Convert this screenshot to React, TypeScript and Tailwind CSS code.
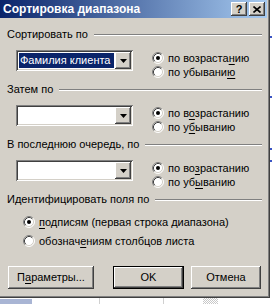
import React from "react";

const raised =
  "shadow-[inset_-1px_-1px_0_#404040,inset_1px_1px_0_#ffffff,inset_-2px_-2px_0_#808080,inset_2px_2px_0_#d4d0c8]";
const sunken =
  "shadow-[inset_1px_1px_0_#808080,inset_-1px_-1px_0_#ffffff,inset_2px_2px_0_#404040,inset_-2px_-2px_0_#d4d0c8]";

function Radio({ checked }: { checked?: boolean }) {
  return (
    <svg width="12" height="12" viewBox="0 0 12 12" className="shrink-0">
      <circle cx="6" cy="6" r="5" fill="#ffffff" />
      <path d="M2.11 9.89 A5.5 5.5 0 0 1 9.89 2.11" stroke="#808080" strokeWidth="1" fill="none" />
      <path d="M9.89 2.11 A5.5 5.5 0 0 1 2.11 9.89" stroke="#ffffff" strokeWidth="1" fill="none" />
      <path d="M2.82 9.18 A4.5 4.5 0 0 1 9.18 2.82" stroke="#404040" strokeWidth="1" fill="none" />
      <path d="M9.18 2.82 A4.5 4.5 0 0 1 2.82 9.18" stroke="#d4d0c8" strokeWidth="1" fill="none" />
      {checked && <circle cx="6" cy="6" r="2" fill="#000000" />}
    </svg>
  );
}

function RadioRow({
  checked,
  children,
  className = "",
}: {
  checked?: boolean;
  children: React.ReactNode;
  className?: string;
}) {
  return (
    <div className={"flex items-center h-[14px] " + className}>
      <Radio checked={checked} />
      <span className="ml-[4px] leading-[13px] whitespace-nowrap">{children}</span>
    </div>
  );
}

function U({ children }: { children: React.ReactNode }) {
  return <span className="underline underline-offset-[2px]">{children}</span>;
}

function Header({ children }: { children: React.ReactNode }) {
  return (
    <div className="flex items-center h-[13px]">
      <span className="leading-[13px] whitespace-nowrap">{children}</span>
      <div className="flex-1 ml-[6px] mr-[7px] flex flex-col">
        <div className="h-px bg-[#808080]" />
        <div className="h-px bg-white" />
      </div>
    </div>
  );
}

function Combo({ value }: { value?: string }) {
  return (
    <div className={"w-[117px] h-[21px] bg-white flex p-[2px] " + sunken}>
      <div className="flex-1 flex items-center pl-px pr-px">
        {value && (
          <div className="h-[15px] flex-1 bg-[#0a246a] text-white leading-[15px] pl-[1px] whitespace-nowrap">
            {value}
          </div>
        )}
      </div>
      <div className={"w-[16px] h-[17px] bg-[#d4d0c8] flex items-center justify-center " + raised}>
        <svg width="7" height="4" viewBox="0 0 7 4">
          <path d="M0 0 H7 L3.5 4 Z" fill="#000" />
        </svg>
      </div>
    </div>
  );
}

function SortGroup({
  title,
  value,
  asc,
  desc,
}: {
  title: React.ReactNode;
  value?: string;
  asc: React.ReactNode;
  desc: React.ReactNode;
}) {
  return (
    <div className="h-[55px] flex flex-col">
      <Header>{title}</Header>
      <div className="flex mt-[9px] ml-[9px]">
        <Combo value={value} />
        <div className="flex flex-col ml-[19px] mt-[1px]">
          <RadioRow checked>{asc}</RadioRow>
          <RadioRow>{desc}</RadioRow>
        </div>
      </div>
    </div>
  );
}

function Button({
  children,
  w,
  def,
}: {
  children: React.ReactNode;
  w: string;
  def?: boolean;
}) {
  if (def) {
    return (
      <div className={"h-[23px] border border-black " + w}>
        <div className={"h-full w-full flex items-center justify-center " + raised}>
          {children}
        </div>
      </div>
    );
  }
  return (
    <div className={"h-[23px] flex items-center justify-center " + raised + " " + w}>
      {children}
    </div>
  );
}

export default function App() {
  return (
    <div className="w-[272px] h-[304px] bg-white overflow-hidden flex flex-col font-['Liberation_Sans',Arial,sans-serif] text-[11px] text-black">
      <div className="flex">
        <div className="w-[270px] h-[298px] bg-[#d4d0c8] flex flex-col shadow-[inset_-1px_-1px_0_#404040,inset_-2px_-2px_0_#808080]">
          {/* title bar */}
          <div className="h-[18px] mr-[3px] flex items-center bg-[linear-gradient(to_right,#0a246a,#a6caf0)]">
            <span className="ml-[3px] text-white font-bold text-[12px] leading-[14px] whitespace-nowrap">
              Сортировка диапазона
            </span>
            <div className="flex-1" />
            <div className={"w-[16px] h-[14px] bg-[#d4d0c8] flex items-center justify-center font-bold text-[11px] leading-none " + raised}>
              ?
            </div>
            <div className={"ml-[2px] mr-[2px] w-[16px] h-[14px] bg-[#d4d0c8] flex items-center justify-center " + raised}>
              <svg width="8" height="7" viewBox="0 0 8 7">
                <path d="M0.5 0.5 L7.5 6.5 M7.5 0.5 L0.5 6.5" stroke="#000" strokeWidth="1.6" />
              </svg>
            </div>
          </div>

          <div className="flex flex-col pl-[7px] pr-[1px] mt-[10px]">
            <SortGroup
              title="Сортировать по"
              value="Фамилия клиента"
              asc={<>по возраста<U>н</U>ию</>}
              desc={<>по убывани<U>ю</U></>}
            />
            <SortGroup
              title="Затем по"
              asc={<>по в<U>о</U>зрастанию</>}
              desc={<>по у<U>б</U>ыванию</>}
            />
            <SortGroup
              title="В последнюю очередь, по"
              asc={<>по во<U>з</U>растанию</>}
              desc={<>по уб<U>ы</U>ванию</>}
            />
            <div className="flex flex-col">
              <Header>Идентифицировать поля по</Header>
              <div className="ml-[16px] mt-[9px] flex flex-col">
                <RadioRow checked>
                  <U>п</U>одписям (первая строка диапазона)
                </RadioRow>
                <RadioRow className="mt-[5px]">
                  обознач<U>е</U>ниям столбцов листа
                </RadioRow>
              </div>
            </div>

            <div className="flex mt-[18px] ml-[1px]">
              <Button w="w-[86px]">
                П<U>а</U>раметры...
              </Button>
              <div className="ml-[19px]">
                <Button w="w-[71px]" def>
                  OK
                </Button>
              </div>
              <div className="ml-[7px]">
                <Button w="w-[70px]">Отмена</Button>
              </div>
            </div>
          </div>
        </div>
        <div className="w-[2px] flex flex-col">
          <div className="h-[36px]" />
          <div className="h-[2px] bg-[#3b55c4]" />
          <div className="h-[58px]" />
          <div className="h-[2px] bg-[#3b55c4]" />
          <div className="h-[50px]" />
          <div className="h-[2px] bg-[#3b55c4]" />
          <div className="h-[10px]" />
          <div className="h-[2px] bg-[#3b55c4]" />
        </div>
      </div>
      <div className="flex h-[6px]">
        <div className="w-[32px] mt-[1px] bg-[#a9b5d4]" />
        <div className="w-[67px]" />
        <div className="w-px bg-[#d0d0d0]" />
        <div className="w-[63px]" />
        <div className="w-px bg-[#d0d0d0]" />
        <div className="w-[39px]" />
        <div className="w-[15px] bg-[repeating-conic-gradient(#c8c8c8_0_25%,#ffffff_0_50%)] bg-[length:2px_2px]" />
      </div>
    </div>
  );
}
